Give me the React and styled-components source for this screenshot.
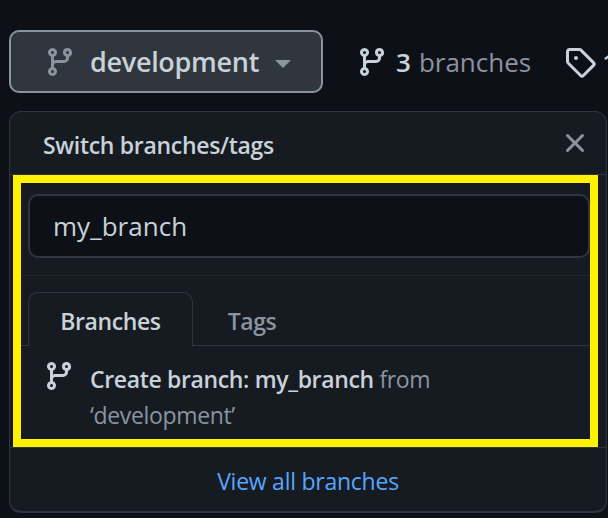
import React from "react";
import styled, { createGlobalStyle } from "styled-components";

const GlobalStyle = createGlobalStyle`
  html, body {
    margin: 0;
    height: 518px;
    overflow: hidden;
    background: #0d1117;
  }
  * { box-sizing: border-box; }
`;

const Page = styled.div`
  width: 608px;
  height: 518px;
  overflow: hidden;
  padding: 30px 0 0 9px;
  font-family: "Open Sans", "Noto Sans", sans-serif;
  color: #c9d1d9;
`;

const TopBar = styled.div`
  display: flex;
  align-items: center;
  width: 640px;
  height: 63px;
`;

const BranchButton = styled.div`
  width: 314px;
  height: 63px;
  display: flex;
  align-items: center;
  padding-left: 33px;
  background: #30363d;
  border: 2px solid #8b949e;
  border-radius: 10px;
  color: #8b949e;
`;

const BranchName = styled.span`
  margin-left: 14px;
  font-size: 27px;
  font-weight: 600;
  letter-spacing: -0.3px;
  color: #c9d1d9;
`;

const Caret = styled.span`
  margin-left: 16px;
  margin-top: 4px;
  border-top: 8px solid #8b949e;
  border-left: 8px solid transparent;
  border-right: 8px solid transparent;
`;

const Stat = styled.div`
  display: flex;
  align-items: center;
  margin-left: ${(p) => p.$gap}px;
  font-size: 26px;
  color: #8b949e;
  white-space: nowrap;
  svg { color: #c9d1d9; flex: none; }
`;

const Count = styled.b`
  font-weight: 600;
  color: #c9d1d9;
  margin: 0 8px 0 ${(p) => p.$gap}px;
`;

const Panel = styled.div`
  margin-top: 18px;
  width: 598px;
  height: 402px;
  background: #161b22;
  border: 1px solid #30363d;
  border-bottom-width: 2px;
  border-radius: 12px;
`;

const PanelHeader = styled.div`
  height: 63px;
  padding: 0 15px 0 33px;
  display: flex;
  align-items: center;
  justify-content: space-between;
  border-bottom: 1px solid #30363d;
`;

const Title = styled.div`
  margin-top: 3px;
  font-size: 23px;
  font-weight: 600;
  letter-spacing: -0.3px;
  color: #c9d1d9;
`;

const Highlight = styled.div`
  margin-left: 3px;
  width: 585px;
  height: 272px;
  border: 8px solid #fff200;
`;

const FilterBox = styled.div`
  padding: 11px 0 17px 7px;
  border-bottom: 1px solid #21262d;
`;

const FilterInput = styled.div`
  width: 562px;
  height: 64px;
  display: flex;
  align-items: center;
  padding-left: 23px;
  background: #0d1117;
  border: 2px solid #30363d;
  border-radius: 10px;
  font-size: 26px;
  letter-spacing: 0.05px;
  color: #c9d1d9;
`;

const Tabs = styled.div`
  display: flex;
  margin-top: 16px;
  padding-left: 7px;
  height: 54px;
  border-bottom: 1px solid #30363d;
`;

const Tab = styled.div`
  width: ${(p) => p.$width}px;
  height: 54px;
  padding-top: 3px;
  display: flex;
  align-items: center;
  justify-content: center;
  font-size: 23px;
  letter-spacing: -0.4px;
  font-weight: 600;
  color: ${(p) => (p.$active ? "#c9d1d9" : "#8b949e")};
  background: ${(p) => (p.$active ? "#161b22" : "transparent")};
  border: ${(p) => (p.$active ? "1px solid #30363d" : "0")};
  border-bottom: 0;
  border-radius: 10px 10px 0 0;
`;

const CreateRow = styled.div`
  display: flex;
  padding: 14px 0 0 24px;
  svg { color: #c9d1d9; flex: none; margin-left: -2px; }
`;

const CreateText = styled.div`
  margin: 1px 0 0 15px;
  width: 420px;
  font-size: 23px;
  line-height: 36px;
  letter-spacing: -0.35px;
  color: #8b949e;
  b { font-weight: 600; color: #c9d1d9; }
`;

const Footer = styled.div`
  height: 65px;
  padding-top: 1px;
  display: flex;
  align-items: center;
  justify-content: center;
  border-top: 1px solid #30363d;
  font-size: 23px;
  letter-spacing: -0.25px;
  color: #58a6ff;
`;

const BRANCH_PATH =
  "M9.5 3.25a2.25 2.25 0 1 1 3 2.122V6A2.5 2.5 0 0 1 10 8.5H6a1 1 0 0 0-1 1v1.128a2.251 2.251 0 1 1-1.5 0V5.372a2.25 2.25 0 1 1 1.5 0v1.836A2.493 2.493 0 0 1 6 7h4a1 1 0 0 0 1-1v-.628A2.25 2.25 0 0 1 9.5 3.25Zm-6 0a.75.75 0 1 0 1.5 0 .75.75 0 0 0-1.5 0Zm8.25-.75a.75.75 0 1 0 0 1.5.75.75 0 0 0 0-1.5ZM4.25 12a.75.75 0 1 0 0 1.5.75.75 0 0 0 0-1.5Z";
const TAG_PATH =
  "M1 7.775V2.75C1 1.784 1.784 1 2.75 1h5.025c.464 0 .91.184 1.238.513l6.25 6.25a1.75 1.75 0 0 1 0 2.474l-5.026 5.026a1.75 1.75 0 0 1-2.474 0l-6.25-6.25A1.75 1.75 0 0 1 1 7.775Zm1.5 0c0 .066.026.13.073.177l6.25 6.25a.25.25 0 0 0 .354 0l5.025-5.025a.25.25 0 0 0 0-.354l-6.25-6.25a.25.25 0 0 0-.177-.073H2.75a.25.25 0 0 0-.25.25ZM6 5a1 1 0 1 1 0 2 1 1 0 0 1 0-2Z";
const CLOSE_PATH =
  "M3.72 3.72a.75.75 0 0 1 1.06 0L8 6.94l3.22-3.22a.749.749 0 0 1 1.06 1.06L9.06 8l3.22 3.22a.749.749 0 1 1-1.06 1.06L8 9.06l-3.22 3.22a.749.749 0 1 1-1.06-1.06L6.94 8 3.72 4.78a.75.75 0 0 1 0-1.06Z";

function Octicon({ d, size = 32, color = "currentColor" }) {
  return (
    <svg width={size} height={size} viewBox="0 0 16 16" fill={color}>
      <path d={d} />
    </svg>
  );
}

export default function App() {
  return (
    <Page>
      <GlobalStyle />
      <TopBar>
        <BranchButton>
          <Octicon d={BRANCH_PATH} />
          <BranchName>development</BranchName>
          <Caret />
        </BranchButton>
        <Stat $gap={33}>
          <Octicon d={BRANCH_PATH} />
          <Count $gap={8}>3</Count>
          branches
        </Stat>
        <Stat $gap={33}>
          <Octicon d={TAG_PATH} />
          <Count $gap={6}>1</Count>
        </Stat>
      </TopBar>
      <Panel>
        <PanelHeader>
          <Title>Switch branches/tags</Title>
          <Octicon d={CLOSE_PATH} color="#8b949e" />
        </PanelHeader>
        <Highlight>
          <FilterBox>
            <FilterInput>my_branch</FilterInput>
          </FilterBox>
          <Tabs>
            <Tab $active $width={165}>Branches</Tab>
            <Tab $width={118}>Tags</Tab>
          </Tabs>
          <CreateRow>
            <Octicon d={BRANCH_PATH} />
            <CreateText>
              <b>Create branch: my_branch</b> from ‘development’
            </CreateText>
          </CreateRow>
        </Highlight>
        <Footer>View all branches</Footer>
      </Panel>
    </Page>
  );
}
